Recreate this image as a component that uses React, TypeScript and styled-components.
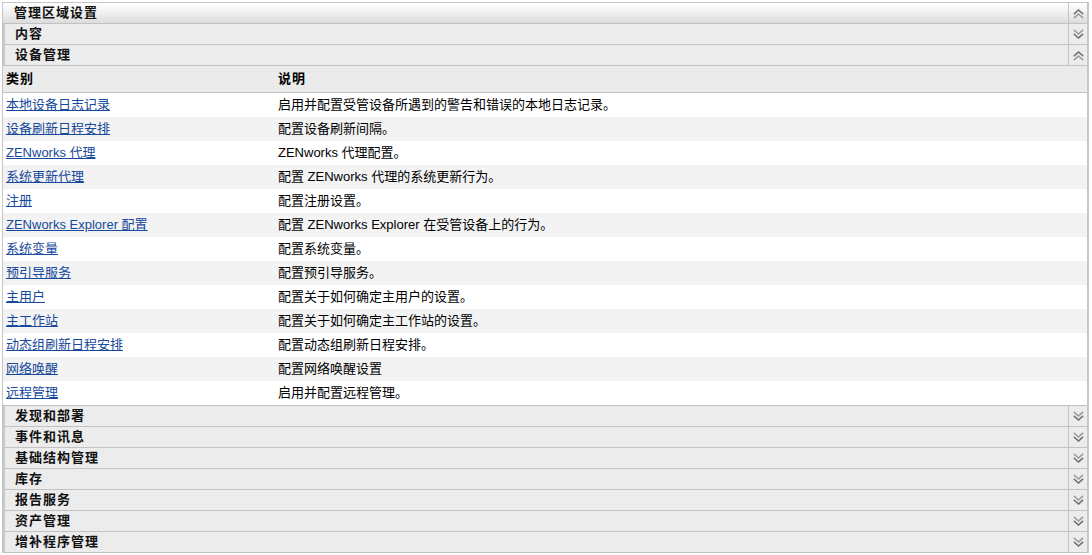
import React from 'react';
import styled, { createGlobalStyle } from 'styled-components';

const GlobalStyle = createGlobalStyle`
  html, body {
    margin: 0;
    padding: 0;
    background: #ffffff;
  }
  body {
    font-family: "Liberation Sans", "Noto Sans CJK SC", sans-serif;
    font-size: 13px;
    color: #000000;
  }
`;

const rows: { name: string; desc: string }[] = [
  { name: '本地设备日志记录', desc: '启用并配置受管设备所遇到的警告和错误的本地日志记录。' },
  { name: '设备刷新日程安排', desc: '配置设备刷新间隔。' },
  { name: 'ZENworks 代理', desc: 'ZENworks 代理配置。' },
  { name: '系统更新代理', desc: '配置 ZENworks 代理的系统更新行为。' },
  { name: '注册', desc: '配置注册设置。' },
  { name: 'ZENworks Explorer 配置', desc: '配置 ZENworks Explorer 在受管设备上的行为。' },
  { name: '系统变量', desc: '配置系统变量。' },
  { name: '预引导服务', desc: '配置预引导服务。' },
  { name: '主用户', desc: '配置关于如何确定主用户的设置。' },
  { name: '主工作站', desc: '配置关于如何确定主工作站的设置。' },
  { name: '动态组刷新日程安排', desc: '配置动态组刷新日程安排。' },
  { name: '网络唤醒', desc: '配置网络唤醒设置' },
  { name: '远程管理', desc: '启用并配置远程管理。' },
];

const collapsed = ['发现和部署', '事件和讯息', '基础结构管理', '库存', '报告服务', '资产管理', '增补程序管理'];

const Panel = styled.div`
  margin: 2px 3px 0 2px;
  border: 1px solid #c6c6c6;
  border-right-width: 2px;
  border-bottom: none;
`;

const Bar = styled.div<{ $top?: boolean }>`
  display: flex;
  height: 20px;
  border-bottom: 1px solid #c2c2c2;
  border-left: ${(p) => (p.$top ? '0' : '2px solid #c8c8c8')};
  background: ${(p) =>
    p.$top ? 'linear-gradient(to bottom, #ffffff 0%, #f1f1f1 45%, #dcdcdc 100%)' : '#ececec'};
`;

const BarTitle = styled.div<{ $top?: boolean }>`
  flex: 1;
  display: flex;
  align-items: center;
  padding-left: ${(p) => (p.$top ? '11px' : '10px')};
  padding-bottom: 3px;
  font-family: "Noto Sans CJK SC", sans-serif;
  font-weight: 700;
  font-size: 13px;
  letter-spacing: 1px;
  color: #111;
`;

const IconCell = styled.div`
  width: 18px;
  border-left: 1px solid #c2c2c2;
  display: flex;
  align-items: center;
  justify-content: center;
`;

const Table = styled.div`
  border-bottom: 1px solid #c2c2c2;
`;

const HeadRow = styled.div`
  display: grid;
  grid-template-columns: 272px 1fr;
  height: 27px;
  padding-bottom: 3px;
  box-sizing: border-box;
  align-items: center;
  background: #ebebeb;
  border-bottom: 1px solid #c2c2c2;
  font-family: "Noto Sans CJK SC", sans-serif;
  font-weight: 700;
  font-size: 13px;
  letter-spacing: 1px;
`;

const HeadCell = styled.div`
  padding-left: 3px;
`;

const DataRow = styled.div<{ $alt: boolean }>`
  display: grid;
  grid-template-columns: 272px 1fr;
  height: 24px;
  padding-bottom: 3px;
  box-sizing: border-box;
  align-items: center;
  background: ${(p) => (p.$alt ? '#f3f3f3' : '#ffffff')};
`;

const Cell = styled.div`
  padding-left: 3px;
  white-space: nowrap;
`;

const Link = styled.a`
  color: #16489c;
  text-decoration: underline;
  cursor: pointer;
`;

const Chevrons: React.FC<{ up?: boolean }> = ({ up }) => (
  <svg width="11" height="11" viewBox="0 0 11 11">
    <g
      fill="none"
      strokeWidth="1.6"
      strokeLinecap="square"
      transform={up ? 'rotate(180 5.5 5.5)' : undefined}
    >
      <polyline points="1.5,1.5 5.5,5 9.5,1.5" stroke="#9a9a9a" />
      <polyline points="1.5,5.5 5.5,9 9.5,5.5" stroke="#6e6e6e" />
    </g>
  </svg>
);

const Section: React.FC<{ title: string; open?: boolean; top?: boolean }> = ({ title, open, top }) => (
  <Bar $top={top}>
    <BarTitle $top={top}>{title}</BarTitle>
    <IconCell>
      <Chevrons up={open} />
    </IconCell>
  </Bar>
);

export default function App() {
  return (
    <>
      <GlobalStyle />
      <Panel>
        <Section title="管理区域设置" open top />
        <Section title="内容" />
        <Section title="设备管理" open />
        <Table>
          <HeadRow>
            <HeadCell>类别</HeadCell>
            <HeadCell>说明</HeadCell>
          </HeadRow>
          {rows.map((r, i) => (
            <DataRow key={r.name} $alt={i % 2 === 1}>
              <Cell>
                <Link>{r.name}</Link>
              </Cell>
              <Cell>{r.desc}</Cell>
            </DataRow>
          ))}
        </Table>
        {collapsed.map((t) => (
          <Section key={t} title={t} />
        ))}
      </Panel>
    </>
  );
}
